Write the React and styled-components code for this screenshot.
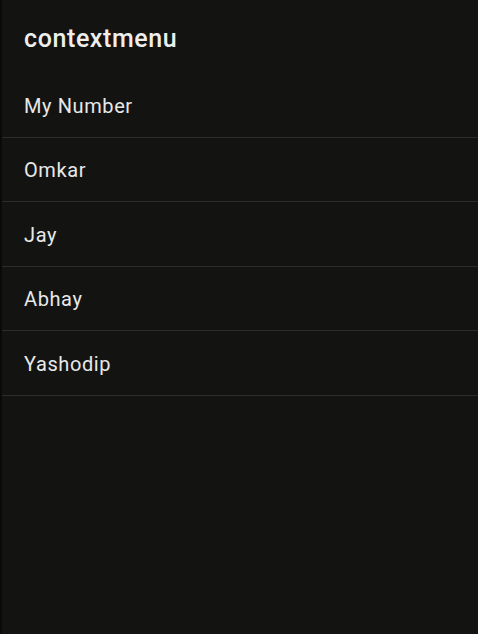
import styled, { createGlobalStyle } from 'styled-components';

const contacts = ["My Number", "Omkar", "Jay", "Abhay", "Yashodip"];

export default function App() {
    return (
        <>
            <Global />
            <Screen>
                <Header>contextmenu</Header>
                <List>
                    {contacts.map((name, index) => <Row key={index}>{name}</Row>)}
                </List>
            </Screen>
        </>
    );
}

const Global = createGlobalStyle`
    html, body {
        margin: 0;
        padding: 0;
        background: #131412;
    }
`;

const Screen = styled.div`
    width: 478px;
    height: 634px;
    box-sizing: border-box;
    background: #131412;
    border-left: 2px solid #0a0a0a;
    font-family: Roboto, 'Noto Sans', sans-serif;
    color: #ececec;
    overflow: hidden;
`;

const Header = styled.div`
    height: 73px;
    display: flex;
    align-items: center;
    padding-left: 22px;
    padding-top: 4px;
    box-sizing: border-box;
    font-size: 25px;
    font-weight: 500;
    letter-spacing: 0.6px;
    color: #eeeeee;
    -webkit-text-stroke: 0;
`;

const List = styled.div`
    display: flex;
    flex-direction: column;
`;

const Row = styled.div`
    height: 64.5px;
    display: flex;
    align-items: center;
    padding-left: 22px;
    padding-top: 2px;
    box-sizing: border-box;
    border-bottom: 1px solid #2c2d2b;
    font-size: 20px;
    letter-spacing: 0.6px;
    color: #e8e8e8;
`;
